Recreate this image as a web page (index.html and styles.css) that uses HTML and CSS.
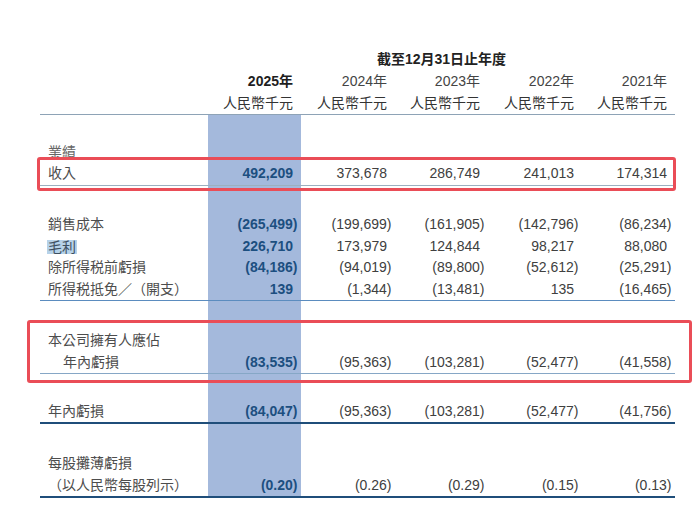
FILE: index.html
```html
<!DOCTYPE html>
<html lang="zh-Hant">
<head>
<meta charset="utf-8">
<title>財務摘要</title>
<link rel="stylesheet" href="styles.css">
</head>
<body>
<div class="page">
  <table class="fin">
    <colgroup>
      <col class="w-label"><col class="w-93"><col class="w-94"><col class="w-93"><col class="w-94"><col class="w-93">
    </colgroup>
    <thead>
      <tr class="hrow">
        <td></td>
        <td colspan="5" class="title">截至12月31日止年度</td>
      </tr>
      <tr class="hrow">
        <td></td>
        <td class="yr cur">2025年</td>
        <td class="yr">2024年</td>
        <td class="yr">2023年</td>
        <td class="yr">2022年</td>
        <td class="yr">2021年</td>
      </tr>
      <tr class="hrow unitrow">
        <td></td>
        <td class="unit">人民幣千元</td>
        <td class="unit">人民幣千元</td>
        <td class="unit">人民幣千元</td>
        <td class="unit">人民幣千元</td>
        <td class="unit">人民幣千元</td>
      </tr>
    </thead>
    <tbody>
      <tr class="sp sp1"><td></td><td class="c1"></td><td></td><td></td><td></td><td></td></tr>
      <tr class="row">
        <td class="lab light">業績</td><td class="c1"></td><td></td><td></td><td></td><td></td>
      </tr>
      <tr class="row line-gray">
        <td class="lab">收入</td>
        <td class="c1 num">492,209</td>
        <td class="num">373,678</td>
        <td class="num">286,749</td>
        <td class="num">241,013</td>
        <td class="num">174,314</td>
      </tr>
      <tr class="sp sp2"><td></td><td class="c1"></td><td></td><td></td><td></td><td></td></tr>
      <tr class="row">
        <td class="lab">銷售成本</td>
        <td class="c1 num neg">(265,499)</td>
        <td class="num neg">(199,699)</td>
        <td class="num neg">(161,905)</td>
        <td class="num neg">(142,796)</td>
        <td class="num neg">(86,234)</td>
      </tr>
      <tr class="row">
        <td class="lab"><span class="sel">毛利</span></td>
        <td class="c1 num">226,710</td>
        <td class="num">173,979</td>
        <td class="num">124,844</td>
        <td class="num">98,217</td>
        <td class="num">88,080</td>
      </tr>
      <tr class="row">
        <td class="lab">除所得税前虧損</td>
        <td class="c1 num neg">(84,186)</td>
        <td class="num neg">(94,019)</td>
        <td class="num neg">(89,800)</td>
        <td class="num neg">(52,612)</td>
        <td class="num neg">(25,291)</td>
      </tr>
      <tr class="row line-blue">
        <td class="lab">所得税抵免／（開支）</td>
        <td class="c1 num">139</td>
        <td class="num neg">(1,344)</td>
        <td class="num neg">(13,481)</td>
        <td class="num">135</td>
        <td class="num neg">(16,465)</td>
      </tr>
      <tr class="sp sp3"><td></td><td class="c1"></td><td></td><td></td><td></td><td></td></tr>
      <tr class="row">
        <td class="lab">本公司擁有人應佔</td><td class="c1"></td><td></td><td></td><td></td><td></td>
      </tr>
      <tr class="row line-lblue">
        <td class="lab indent">年內虧損</td>
        <td class="c1 num neg">(83,535)</td>
        <td class="num neg">(95,363)</td>
        <td class="num neg">(103,281)</td>
        <td class="num neg">(52,477)</td>
        <td class="num neg">(41,558)</td>
      </tr>
      <tr class="sp sp4"><td></td><td class="c1"></td><td></td><td></td><td></td><td></td></tr>
      <tr class="row line-thick">
        <td class="lab">年內虧損</td>
        <td class="c1 num neg">(84,047)</td>
        <td class="num neg">(95,363)</td>
        <td class="num neg">(103,281)</td>
        <td class="num neg">(52,477)</td>
        <td class="num neg">(41,756)</td>
      </tr>
      <tr class="sp sp5"><td></td><td class="c1"></td><td></td><td></td><td></td><td></td></tr>
      <tr class="row">
        <td class="lab">每股攤薄虧損</td><td class="c1"></td><td></td><td></td><td></td><td></td>
      </tr>
      <tr class="row line-thick">
        <td class="lab">（以人民幣每股列示）</td>
        <td class="c1 num neg">(0.20)</td>
        <td class="num neg">(0.26)</td>
        <td class="num neg">(0.29)</td>
        <td class="num neg">(0.15)</td>
        <td class="num neg">(0.13)</td>
      </tr>
    </tbody>
  </table>
  <div class="mark mark-revenue"></div>
  <div class="mark mark-attrib"></div>
</div>
</body>
</html>
```

FILE: styles.css
```css
html, body {
  margin: 0;
  padding: 0;
  background: #ffffff;
}

.page {
  position: relative;
  width: 700px;
  height: 510px;
  padding-top: 48px;
  box-sizing: border-box;
  font-family: "Liberation Sans", "Noto Sans CJK TC", sans-serif;
  font-size: 14px;
  color: #444444;
}

.fin {
  margin-left: 40px;
  width: 635px;
  table-layout: fixed;
  border-collapse: separate;
  border-spacing: 0;
}

.w-label { width: 168px; }
.w-93 { width: 93px; }
.w-94 { width: 94px; }

.fin td {
  padding: 0;
  white-space: nowrap;
  overflow: visible;
}

.hrow td {
  height: 22px;
  line-height: 22px;
}

.title {
  text-align: center;
  font-weight: bold;
  color: #222222;
}

.yr {
  text-align: right;
  padding-right: 8px !important;
  color: #444444;
}

.yr.cur {
  font-weight: bold;
  color: #1e1e1e;
}

.unit {
  text-align: right;
  padding-right: 8px !important;
  color: #333333;
}

.unitrow td {
  border-bottom: 1px solid #8ea3b6;
}

.row td {
  height: 21.5px;
  line-height: 21.5px;
}

.lab {
  padding-left: 8px !important;
  color: #4d4d4d;
}

.lab.light {
  color: #666666;
}

.lab.indent {
  padding-left: 23px !important;
}

.num {
  text-align: right;
  padding-right: 8px !important;
  color: #404040;
}

.num.neg {
  padding-right: 3.5px !important;
}

.c1 {
  background: #a4b9dc;
}

.c1.num {
  font-weight: bold;
  color: #1c4f80;
}

.sel {
  display: inline-block;
  height: 14px;
  line-height: 14px;
  background: #b6d2e9;
  color: #3d4f60;
  padding: 0 1px;
  margin-left: -1px;
  vertical-align: middle;
}

.sp td {
  padding: 0;
  line-height: 0;
  font-size: 0;
}

.sp1 td { height: 26.5px; }
.sp2 td { height: 28.5px; }
.sp3 td { height: 29px; }
.sp4 td { height: 26.5px; }
.sp5 td { height: 29px; }

.line-gray td {
  border-bottom: 1px solid #9cb0c0;
}

.line-blue td {
  border-bottom: 1px solid #5b8cbf;
}

.line-lblue td {
  border-bottom: 1px solid #86a7c6;
}

.line-thick td {
  border-bottom: 2px solid #1f4e7a;
}

.mark {
  position: absolute;
  border: 3px solid #ea4d57;
  border-radius: 3px;
  box-sizing: border-box;
}

.mark-revenue {
  left: 37px;
  top: 157px;
  width: 639px;
  height: 34px;
}

.mark-attrib {
  left: 27px;
  top: 320px;
  width: 665px;
  height: 63px;
}
```
